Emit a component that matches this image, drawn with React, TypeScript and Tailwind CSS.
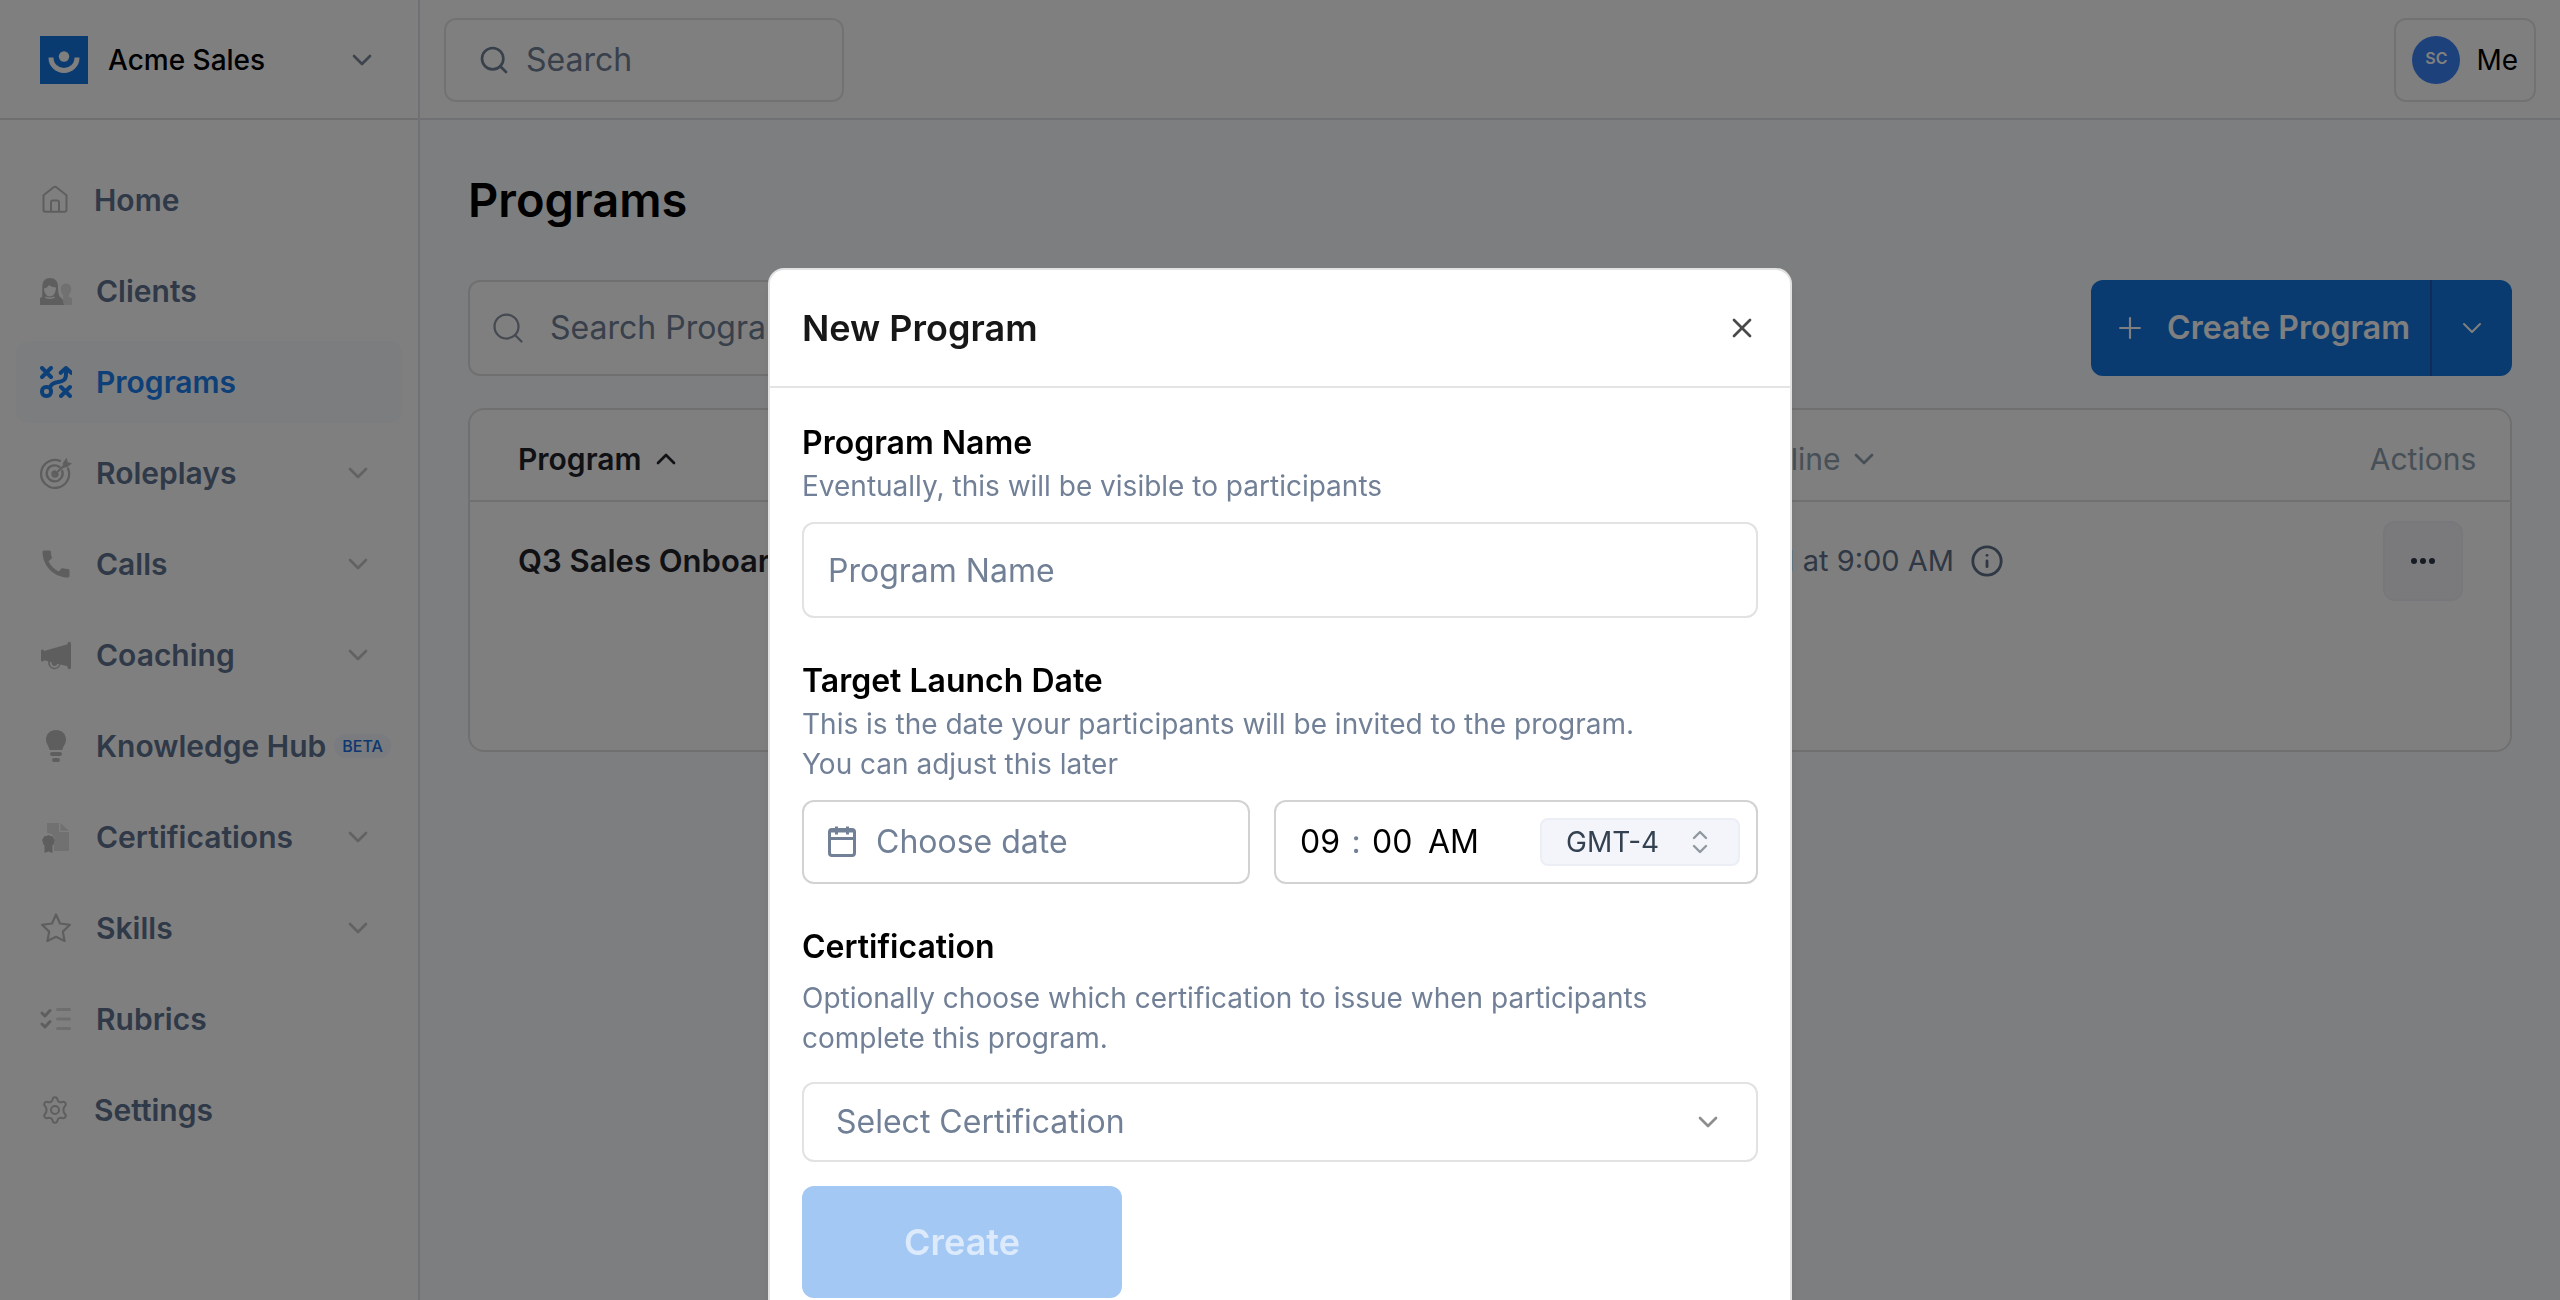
import type { ReactNode } from 'react';
import { ChevronDown, ChevronUp, Info, Plus, Search, X } from 'lucide-react';
import { MdCall } from 'react-icons/md';

function HomeIcon() {
  return (
    <svg width="30" height="32" viewBox="0 0 30 32" fill="none" stroke="#bdbdbd" strokeWidth="2" strokeLinejoin="round">
      <path d="M3.5 11.2 13.6 3.3a2.2 2.2 0 0 1 2.8 0L26.5 11.2V26a1.8 1.8 0 0 1-1.8 1.8H5.3A1.8 1.8 0 0 1 3.5 26Z" />
      <path d="M11 27.6V18a1.6 1.6 0 0 1 1.6-1.6h4.8A1.6 1.6 0 0 1 19 18v9.6" />
    </svg>
  );
}

function ClientsIcon() {
  return (
    <svg width="32" height="32" viewBox="0 0 32 32">
      <path d="M26 8.500c3.200 0 5.200 2.400 5.200 5.500 0 2.800-1 4.700-2.400 6v1.800l3.200 1.500V30h-7.500c-.4-2.500-1.300-4.500-2.600-5.600l1.300-1.100V20c-1.400-1.300-2.400-3.200-2.400-6 0-3.100 2-5.500 5.200-5.500Z" fill="#e2e2e2" />
      <path d="M10 3c5 0 7.800 3.200 8 8 .2 4.500.2 8 1.800 10.800 2.400 1.400 3.700 4 4.200 8.200H0v-7l2-1c.4-3 .2-7 .3-11C2.500 6.200 5 3 10 3Z" fill="#bdbdbd" />
      <path d="M4 13.500c2.600-.5 4.200-1.700 5-3.500 1.700 1.600 4 2.300 7 2.500-.1 5-2.700 9-6 9s-5.800-3.300-6-8Z" fill="#fff" />
      <path d="M5.500 22c1.500 1.500 7.500 1.500 9 0" stroke="#fff" strokeWidth="1.500" fill="none" />
    </svg>
  );
}

function ProgramsIcon() {
  return (
    <svg width="32" height="32" viewBox="0 0 32 32" fill="none" stroke="#1a80f0" strokeWidth="4" strokeLinecap="round" strokeLinejoin="round">
      <path d="m2 2 9 9M11 2l-9 9M21 21l9 9M30 21l-9 9" />
      <rect x="2" y="21" width="9" height="9" rx="4" />
      <path d="M10.300 20.600C14 12.500 26 20 26 8V2.500M20.700 6.800 26 2l5.200 4.800" />
    </svg>
  );
}

function TargetIcon() {
  return (
    <svg width="32" height="32" viewBox="0 0 32 32" fill="none" stroke="#bdbdbd" strokeWidth="2.300" strokeLinecap="round">
      <path d="M20 3.800A14 14 0 1 0 28 11.500" />
      <path d="M19.500 10A8 8 0 1 0 22.300 14" />
      <path d="M17.500 17a2.500 2.500 0 1 1-2.500-2.500M15 17 25 8" />
      <path d="m23.500 5.800 3-4.300.8 4.200 4 .8-4.300 3.200-3.500.5Z" fill="#bdbdbd" strokeWidth="1" />
    </svg>
  );
}

function MegaphoneIcon() {
  return (
    <svg width="32" height="32" viewBox="0 0 32 32">
      <path d="M1 12.200a1.500 1.500 0 0 1 3-.3L27.500 5.200V4.500a1.700 1.700 0 0 1 3.500 0v24a1.700 1.700 0 0 1-3.500 0v-1.200L20.500 25.500a6.200 6.200 0 0 1-12.200-3.200L4 21.200a1.500 1.500 0 0 1-3-.3Z" fill="#bdbdbd" />
      <path d="M10.800 23a3.800 3.800 0 0 0 7.500 2" stroke="#fff" strokeWidth="1.800" fill="none" />
    </svg>
  );
}

function BulbIcon() {
  return (
    <svg width="32" height="32" viewBox="0 0 32 32" fill="#bdbdbd">
      <path d="M16 0c6 0 10 4 10 9.500 0 4.500-2.600 6-3.600 10.500H9.600C8.600 15.500 6 14 6 9.500 6 4 10 0 16 0Z" />
      <rect x="10" y="22" width="12" height="4" rx="2" />
      <rect x="12" y="28" width="8" height="4" rx="2" />
    </svg>
  );
}

function CertificateIcon() {
  return (
    <svg width="32" height="32" viewBox="0 0 32 32">
      <path d="M7 2h12v9h10v19H14v-7.500a7.500 7.500 0 0 0-7-10.500Z" fill="#e2e2e2" />
      <path d="m20.500 2 8.500 7.800h-8.500Z" fill="#e2e2e2" />
      <path d="m8.500 14 2 1 2.200.3.800 2 1.300 1.700-.7 2.200-.2 2-1.400 1v7.800l-4-1.500-4 1.500v-7.800l-1.400-1-.2-2-.9-2.200 1.300-1.700.8-2 2.300-.3Z" fill="#bdbdbd" />
    </svg>
  );
}

function StarIcon() {
  return (
    <svg width="32" height="32" viewBox="0 0 32 32" fill="none" stroke="#bdbdbd" strokeWidth="2.200" strokeLinejoin="round">
      <path d="M16 2.500 20 11.500 30 12.800 22.800 19.600 24.600 29 16 24.800 7.400 29 9.200 19.600 2 12.800 12 11.500Z" />
    </svg>
  );
}

function RubricsIcon() {
  return (
    <svg width="32" height="32" viewBox="0 0 32 32" fill="none" strokeWidth="3" strokeLinecap="round" strokeLinejoin="round">
      <path d="m2 10 3 3 5-5.500M2 21l3 3 5-5.500" stroke="#bdbdbd" />
      <path d="M17.500 6.500h12M17.500 16h12M17.500 25.500h12" stroke="#dcdcdc" />
    </svg>
  );
}

function GearIcon() {
  return (
    <svg width="30" height="32" viewBox="0 0 30 32" fill="none" stroke="#bdbdbd" strokeWidth="2" strokeLinejoin="round">
      <circle cx="15" cy="16" r="4" />
      <path d="M12.600 5.400C13 2.600 17 2.600 17.400 5.400C17.800 7.800 20 9 22.300 8C25 7 27 10.300 24.800 12.200C23 13.800 23 18.200 24.800 19.800C27 21.700 25 25 22.300 24C20 23 17.800 24.200 17.400 26.600C17 29.400 13 29.400 12.600 26.600C12.200 24.200 10 23 7.700 24C5 25 3 21.700 5.200 19.800C7 18.200 7 13.800 5.200 12.200C3 10.300 5 7 7.700 8C10 9 12.200 7.800 12.600 5.400Z" />
    </svg>
  );
}

type NavItem = {
  label: string;
  icon: ReactNode;
  expandable?: boolean;
  active?: boolean;
  badge?: string;
};

const navItems: NavItem[] = [
  { label: 'Home', icon: <HomeIcon /> },
  { label: 'Clients', icon: <ClientsIcon /> },
  { label: 'Programs', icon: <ProgramsIcon />, active: true },
  { label: 'Roleplays', icon: <TargetIcon />, expandable: true },
  { label: 'Calls', icon: <MdCall size={36} color="#bdbdbd" className="-mx-0.5" />, expandable: true },
  { label: 'Coaching', icon: <MegaphoneIcon />, expandable: true },
  { label: 'Knowledge Hub', icon: <BulbIcon />, badge: 'BETA' },
  { label: 'Certifications', icon: <CertificateIcon />, expandable: true },
  { label: 'Skills', icon: <StarIcon />, expandable: true },
  { label: 'Rubrics', icon: <RubricsIcon /> },
  { label: 'Settings', icon: <GearIcon /> },
];

function Sidebar() {
  return (
    <aside className="w-[420px] shrink-0 border-r-2 border-[#dfe3e9] bg-white">
      <button className="flex h-[120px] w-full items-center border-b-2 border-[#dfdfdf] px-10 pt-0.5 text-left">
        <svg width="48" height="48" viewBox="0 0 48 48" aria-hidden="true">
          <rect width="48" height="48" fill="#1476e0" />
          <ellipse cx="24" cy="20.500" rx="5.200" ry="5.200" fill="#fff" />
          <path d="M11 21.500c0 7.500 5.800 13 13 13s13-5.500 13-13" stroke="#fff" strokeWidth="5" fill="none" />
        </svg>
        <span className="ml-5 flex-1 text-[28px] font-medium text-black">Acme Sales</span>
        <ChevronDown size={32} strokeWidth={2} color="#7d889a" />
      </button>

      <nav className="flex flex-col gap-[9px] px-4 pt-[39px]">
        {navItems.map((item) => (
          <a
            key={item.label}
            href="#"
            className={`flex h-[82px] items-center rounded-xl pl-6 text-[30px] font-semibold ${
              item.active ? 'bg-[#f8fafe] text-[#1a80f0]' : 'text-[#5f7390]'
            }`}
          >
            {item.icon}
            <span className="ml-6 whitespace-nowrap">{item.label}</span>
            {item.badge && (
              <span className="ml-2 rounded-full bg-[#f3f6ff] px-2 text-base font-medium text-[#1a70e0]">{item.badge}</span>
            )}
            {item.expandable && <ChevronDown size={32} strokeWidth={2} color="#c4c4c4" className="mr-7 ml-auto" />}
          </a>
        ))}
      </nav>
    </aside>
  );
}

function TopBar() {
  return (
    <header className="flex h-[120px] items-center justify-between border-b-2 border-[#dfe3e9] bg-white px-6 pt-0.5">
      <label className="flex h-[84px] w-[400px] items-center gap-4 rounded-xl border-2 border-[#e5e5e5] px-8">
        <Search size={32} strokeWidth={2} color="#718096" className="shrink-0" />
        <input
          aria-label="Search"
          placeholder="Search"
          className="w-full min-w-0 text-[32px] outline-none placeholder:text-[#718096]"
        />
      </label>
      <button className="flex h-[84px] items-center gap-4 rounded-xl border-2 border-[#e5e5e5] px-4 text-[28px]">
        <span className="flex size-12 items-center justify-center rounded-full bg-[#3b82f6] pb-1 text-base font-semibold text-white">
          SC
        </span>
        Me
      </button>
    </header>
  );
}

function ProgramsTable() {
  return (
    <div className="mt-8 rounded-2xl border-2 border-[#e0e0e0] bg-white pb-[130px]">
      <table className="w-full table-fixed text-left text-[30px]">
        <thead>
          <tr className="h-[91px] border-b-2 border-[#e0e0e0] text-[#8e9eae]">
            <th className="w-[60%] pt-2 pl-12 font-semibold text-[#1f2328]">
              <span className="flex items-center gap-2">
                Program <ChevronUp size={32} strokeWidth={2} />
              </span>
            </th>
            <th className="pt-2 pl-[22px] font-normal">
              <span className="flex items-center gap-2">
                Deadline <ChevronDown size={32} strokeWidth={2} />
              </span>
            </th>
            <th className="w-[174px] pt-2 text-center font-normal">Actions</th>
          </tr>
        </thead>
        <tbody>
          <tr className="h-[119px]">
            <td className="pl-12 text-[31px] font-semibold text-[#1f2328]">Q3 Sales Onboarding</td>
            <td className="pl-[22px] text-[29px] text-[#5f7088]">
              <span className="flex items-center gap-4">
                Jul 31 at 9:00 AM <Info size={34} strokeWidth={2} />
              </span>
            </td>
            <td>
              <button
                aria-label="Program actions"
                className="mx-auto flex size-20 items-center justify-center gap-[3px] rounded-xl border-2 border-[#eeeef8] bg-[#f4f5fa]"
              >
                <span className="size-[6px] rounded-full bg-[#2d3748]" />
                <span className="size-[6px] rounded-full bg-[#2d3748]" />
                <span className="size-[6px] rounded-full bg-[#2d3748]" />
              </button>
            </td>
          </tr>
        </tbody>
      </table>
    </div>
  );
}

function NewProgramModal() {
  return (
    <div className="fixed inset-0 flex items-start justify-center overflow-hidden bg-black/50 pt-[268px]">
      <div role="dialog" aria-labelledby="modal-title" className="w-full max-w-5xl rounded-2xl border-2 border-[#e2e2e2] bg-white shadow-lg">
        <div className="flex h-[118px] items-center justify-between border-b-2 border-[#e4e4e4] px-8">
          <h2 id="modal-title" className="text-[36px] font-semibold text-[#171717]">New Program</h2>
          <button aria-label="Close">
            <X size={32} strokeWidth={2} color="#4a4a4a" />
          </button>
        </div>

        <form className="flex flex-col px-8 pt-8 pb-12 text-[32px]">
          <label htmlFor="program-name" className="leading-[46px] font-semibold text-black">Program Name</label>
          <p className="text-[28px] leading-10 text-[#718096]">Eventually, this will be visible to participants</p>
          <input
            id="program-name"
            placeholder="Program Name"
            className="mt-4 h-24 rounded-xl border-2 border-[#e2e2e2] px-6 outline-none placeholder:text-[#718096]"
          />

          <label htmlFor="launch-date" className="mt-10 leading-[46px] font-semibold text-black">Target Launch Date</label>
          <p className="text-[28px] leading-10 text-[#718096]">
            This is the date your participants will be invited to the program.
            <br />
            You can adjust this later
          </p>
          <div className="mt-4 flex gap-6">
            <button
              id="launch-date"
              type="button"
              className="flex h-[84px] w-[448px] items-center gap-5 rounded-xl border-2 border-[#d2d2d2] px-6 text-[#718096]"
            >
              <svg width="28" height="32" viewBox="0 0 28 32" fill="none" stroke="#718096" strokeWidth="3" strokeLinejoin="round">
                <rect x="1.500" y="3.500" width="25" height="26" rx="2.500" />
                <path d="M1.500 12.500h25M8.500 .5v8M19.500 .5v8" />
                <path d="M2 5.500h24" strokeWidth="2" />
              </svg>
              Choose date
            </button>
            <div className="flex h-[84px] flex-1 items-center rounded-xl border-2 border-[#d2d2d2] pr-4 pl-6 text-black">
              <input aria-label="Hour" defaultValue="09" className="w-[46px] outline-none" />
              <span className="w-5 text-center text-[#718096]">:</span>
              <input aria-label="Minute" defaultValue="00" className="ml-1.5 w-14 outline-none" />
              <input aria-label="AM or PM" defaultValue="AM" className="w-[72px] outline-none" />
              <div className="relative ml-auto w-[200px]">
                <select
                  aria-label="Time zone"
                  className="block h-12 w-full appearance-none rounded-lg border-2 border-[#eceef5] bg-[#f4f5fb] pl-6 text-[28px] text-[#334150] outline-none"
                >
                  <option>GMT-4</option>
                </select>
                <svg
                  className="pointer-events-none absolute top-3 right-8"
                  width="16"
                  height="24"
                  viewBox="0 0 16 24"
                  fill="none"
                  stroke="#8e999f"
                  strokeWidth="2.400"
                  strokeLinecap="round"
                  strokeLinejoin="round"
                >
                  <path d="m2 8 6-6 6 6M2 16l6 6 6-6" />
                </svg>
              </div>
            </div>
          </div>

          <label htmlFor="certification" className="mt-10 leading-[46px] font-semibold text-black">Certification</label>
          <p className="mt-2 text-[28px] leading-10 text-[#718096]">
            Optionally choose which certification to issue when participants
            <br />
            complete this program.
          </p>
          <div className="relative mt-6">
            <select
              id="certification"
              className="block h-20 w-full appearance-none rounded-xl border-2 border-[#e2e2e2] px-8 text-[#718096] outline-none"
            >
              <option>Select Certification</option>
            </select>
            <ChevronDown size={32} strokeWidth={2} color="#8e8e8e" className="pointer-events-none absolute top-6 right-[34px]" />
          </div>

          <button
            type="submit"
            disabled
            className="mt-6 h-28 w-80 rounded-xl bg-[#a3c8f4] text-[36px] font-semibold text-[#dceafc]"
          >
            Create
          </button>
        </form>
      </div>
    </div>
  );
}

export default function App() {
  return (
    <div className="flex min-h-screen bg-[#fafcff] font-['Inter',sans-serif]">
      <Sidebar />
      <div className="min-w-0 flex-1">
        <TopBar />
        <main className="px-12 pt-12">
          <h1 className="text-[47px] leading-[64px] font-semibold text-black">Programs</h1>
          <div className="mt-12 flex justify-between">
            <label className="flex h-24 w-[640px] items-center gap-6 rounded-xl border-2 border-[#e0e0e0] bg-white px-5">
              <Search size={36} strokeWidth={1.5} color="#8a93a3" className="shrink-0" />
              <input
                aria-label="Search Programs"
                placeholder="Search Programs"
                className="w-full min-w-0 text-[32px] outline-none placeholder:text-[#718096]"
              />
            </label>
            <div className="flex h-24 overflow-hidden rounded-xl bg-[#1476e0] text-[32px] font-semibold text-white">
              <button className="flex items-center gap-5 border-r-2 border-[#2258b0] pr-5 pl-[22px]">
                <Plus size={34} strokeWidth={1.5} />
                Create Program
              </button>
              <button aria-label="More create options" className="flex w-20 items-center justify-center">
                <ChevronDown size={32} strokeWidth={1.5} />
              </button>
            </div>
          </div>
          <ProgramsTable />
        </main>
      </div>
      <NewProgramModal />
    </div>
  );
}
